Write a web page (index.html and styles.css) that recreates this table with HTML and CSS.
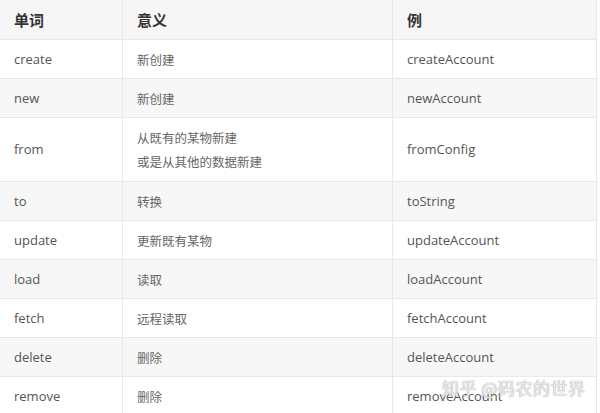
FILE: index.html
```html
<!DOCTYPE html>
<html lang="zh-CN">
<head>
  <meta charset="UTF-8">
  <title>命名动词</title>
  <link rel="stylesheet" href="styles.css">
</head>
<body>
  <div class="sheet">
    <table class="words">
      <thead>
        <tr>
          <th class="col-word">单词</th>
          <th class="col-mean">意义</th>
          <th class="col-eg">例</th>
        </tr>
      </thead>
      <tbody>
        <tr><td>create</td><td class="zh">新创建</td><td>createAccount</td></tr>
        <tr><td>new</td><td class="zh">新创建</td><td>newAccount</td></tr>
        <tr class="tall"><td>from</td><td class="zh">从既有的某物新建<br>或是从其他的数据新建</td><td>fromConfig</td></tr>
        <tr><td>to</td><td class="zh">转换</td><td>toString</td></tr>
        <tr><td>update</td><td class="zh">更新既有某物</td><td>updateAccount</td></tr>
        <tr><td>load</td><td class="zh">读取</td><td>loadAccount</td></tr>
        <tr><td>fetch</td><td class="zh">远程读取</td><td>fetchAccount</td></tr>
        <tr><td>delete</td><td class="zh">删除</td><td>deleteAccount</td></tr>
        <tr><td>remove</td><td class="zh">删除</td><td>removeAccount</td></tr>
      </tbody>
    </table>
    <div class="watermark">知乎 @码农的世界</div>
  </div>
</body>
</html>
```

FILE: styles.css
```css
body {
  margin: 0;
  background-color: #fff;
  font-family: "Open Sans", "Noto Sans CJK SC", sans-serif;
  color: #555;
  overflow: hidden;
}

.sheet {
  position: relative;
  width: 600px;
  height: 413px;
  overflow: hidden;
}

.words {
  width: 597px;
  border-collapse: collapse;
  border-right: 1px solid #e8e8e8;
}

.words th,
.words td {
  border: 1px solid #e8e8e8;
  border-top: none;
  border-left: none;
  padding: 7px 14px;
  line-height: 24px;
  text-align: left;
  vertical-align: middle;
}

.words th {
  background-color: #f6f6f6;
  color: #333;
  font-size: 15px;
  font-weight: bold;
  padding-top: 8px;
  padding-bottom: 7px;
}

.words td {
  font-size: 13px;
}

.words td.zh {
  font-size: 12.5px;
  color: #666;
  padding-top: 9px;
  padding-bottom: 5px;
}

.words tbody tr:nth-child(even) td {
  background-color: #f7f7f7;
}

.words tr.tall td {
  padding-top: 7px;
  padding-bottom: 8px;
}

.words tr.tall td.zh {
  padding-top: 9px;
  padding-bottom: 6px;
}

.col-word {
  width: 94px;
}

.col-mean {
  width: 241px;
}

.watermark {
  position: absolute;
  left: 442px;
  top: 375px;
  font-size: 17px;
  font-family: "Noto Sans CJK SC", sans-serif;
  color: rgba(255, 255, 255, 0.75);
  text-shadow: 0 0 1px #aaa, 0 0 1px #aaa;
  letter-spacing: 0.5px;
}
```
